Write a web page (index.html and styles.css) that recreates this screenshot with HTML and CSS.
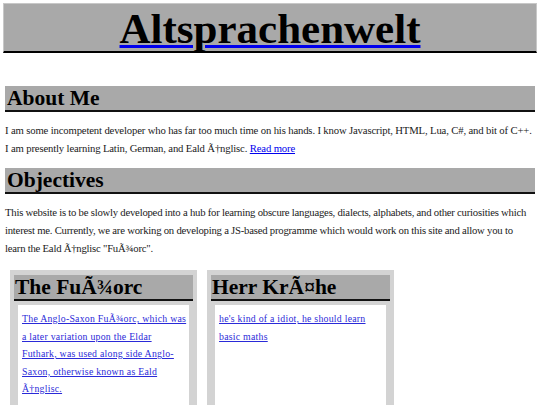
FILE: index.html
```
<!DOCTYPE html>
<html lang="en">
<head>
<meta charset="utf-8">
<title>Altsprachenwelt</title>
<link rel="stylesheet" href="styles.css">
</head>
<body>
<header class="banner">
  <a class="title-link" href="#"><h1 class="title">Altsprachenwelt</h1></a>
</header>
<main>
  <h2 class="section-title section-about">About Me</h2>
  <p class="text text-about">I am some incompetent developer who has far too much time on his hands. I know Javascript, HTML, Lua, C#, and bit of C++. I am presently learning Latin, German, and Eald Ã†nglisc. <a href="#">Read more</a></p>
  <h2 class="section-title">Objectives</h2>
  <p class="text">This website is to be slowly developed into a hub for learning obscure languages, dialects, alphabets, and other curiosities which interest me. Currently, we are working on developing a JS-based programme which would work on this site and allow you to learn the Eald Ã†nglisc "FuÃ¾orc".</p>
  <div class="cards">
    <section class="card">
      <h3 class="card-title">The FuÃ¾orc</h3>
      <div class="card-body"><a href="#">The Anglo-Saxon FuÃ¾orc, which was a later variation upon the Eldar Futhark, was used along side Anglo-Saxon, otherwise known as Eald Ã†nglisc.</a></div>
    </section>
    <section class="card">
      <h3 class="card-title">Herr KrÃ¤he</h3>
      <div class="card-body"><a href="#">he's kind of a idiot, he should learn basic maths</a></div>
    </section>
  </div>
</main>
</body>
</html>
```
FILE: styles.css
```
html, body {
  background: #fff;
}
body {
  margin: 3px;
  font-family: "Liberation Serif", serif;
  color: #000;
}
.banner {
  background: #a9a9a9;
  border: 1px solid #c8c8c8;
  border-bottom: 2px solid #000;
  height: 45px;
  padding-top: 2px;
  text-align: center;
}
.title-link {
  color: #0000ee;
  text-decoration: underline;
  text-decoration-thickness: 3px;
  text-underline-offset: 2px;
}
.title {
  display: inline;
  margin: 0;
  font-size: 43px;
  line-height: 45px;
  font-weight: bold;
  color: #000;
}
main {
  padding: 0 2px;
}
.section-title {
  margin: 0;
  background: #a9a9a9;
  border-bottom: 2px solid #111;
  font-size: 21.5px;
  line-height: 24px;
  font-weight: bold;
  padding-left: 2px;
  margin-top: 11px;
}
.section-about {
  margin-top: 33px;
}
.text {
  margin: 9px 0 0;
  font-size: 10.7px;
  letter-spacing: -0.22px;
  line-height: 18px;
  color: #1a1a1a;
}
.text-about {
  letter-spacing: -0.15px;
}
.text a {
  color: #0000ee;
}
.cards {
  display: flex;
  gap: 10px;
  margin-top: 13px;
  padding-left: 5px;
}
.card {
  width: 179px;
  padding: 5px 4px 0;
  background: #d3d3d3;
  height: 140px;
}
.card-title {
  margin: 0;
  background: #a9a9a9;
  border-bottom: 2px solid #111;
  font-size: 21.5px;
  line-height: 24px;
  font-weight: bold;
  padding-left: 1px;
}
.card-body {
  margin: 4px 4px 0;
  background: #fff;
  padding: 5px 1px 0 4px;
  height: 120px;
  font-size: 9.8px;
  letter-spacing: 0.25px;
  line-height: 17.5px;
}
.card-body a {
  color: #2a2ad8;
}
```
